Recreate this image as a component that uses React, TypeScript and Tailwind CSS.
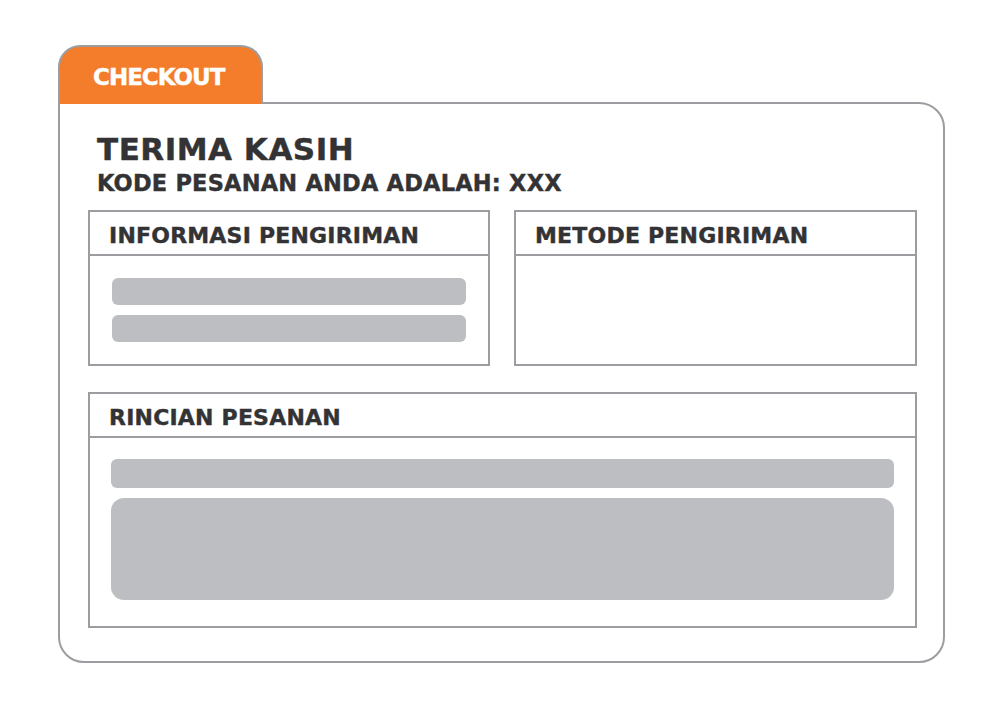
import React from 'react';

const font = { fontFamily: '"DejaVu Sans", "Liberation Sans", sans-serif' };

const Bar: React.FC<{ className?: string }> = ({ className }) => (
  <div className={`bg-[#bdbec1] ${className ?? ''}`} />
);

const Section: React.FC<{ title: string; className?: string; bodyClass?: string; children?: React.ReactNode }> = ({
  title,
  className,
  bodyClass,
  children,
}) => (
  <div className={`border-2 border-[#9c9da1] flex flex-col ${className ?? ''}`}>
    <div className="h-[44px] border-b-2 border-[#9c9da1] flex items-center pl-[19px] pt-[6px]">
      <span className="text-[22px] font-bold text-[#333335] tracking-[0.2px] leading-none [-webkit-text-stroke:0.4px_#333335]">
        {title}
      </span>
    </div>
    <div className={`flex-1 ${bodyClass ?? ''}`}>{children}</div>
  </div>
);

export default function App() {
  return (
    <div className="w-[1004px] h-[709px] bg-white pt-[45px] pl-[58px]" style={font}>
      <div className="w-[887px]">
        {/* tab */}
        <div className="relative z-10 -mb-[2px] w-[205px] h-[59px] bg-[#f47d2b] border-2 border-b-0 border-[#9c9da1] rounded-t-[22px] flex items-center pl-[33px] pt-[4px]">
          <span className="text-white text-[23px] font-bold leading-none tracking-[-1px] [-webkit-text-stroke:0.4px_#ffffff]">CHECKOUT</span>
        </div>

        {/* card */}
        <div className="h-[561px] border-2 border-[#9c9da1] rounded-tr-[26px] rounded-b-[26px] pl-[28px] pr-[26px] pt-[30px]">
          <div className="pl-[9px] text-[#333335] [-webkit-text-stroke:0.4px_#333335]">
            <div className="text-[31px] font-bold leading-none tracking-[0.5px]">TERIMA KASIH</div>
            <div className="mt-[7px] text-[22.5px] font-bold leading-none tracking-[0.2px]">KODE PESANAN ANDA ADALAH: XXX</div>
          </div>

          <div className="mt-[15px] flex gap-[24px]">
            <Section title="INFORMASI PENGIRIMAN" className="w-[402px] h-[156px]" bodyClass="px-[22px] pt-[22px] flex flex-col gap-[10px]">
              <Bar className="h-[27px] rounded-[6px]" />
              <Bar className="h-[27px] rounded-[6px]" />
            </Section>
            <Section title="METODE PENGIRIMAN" className="w-[403px] h-[156px]" />
          </div>

          <Section title="RINCIAN PESANAN" className="mt-[26px] w-[829px] h-[236px]" bodyClass="px-[21px] pt-[21px] flex flex-col gap-[10px]">
            <Bar className="h-[29px] rounded-[6px]" />
            <Bar className="h-[102px] rounded-[13px]" />
          </Section>
        </div>
      </div>
    </div>
  );
}
